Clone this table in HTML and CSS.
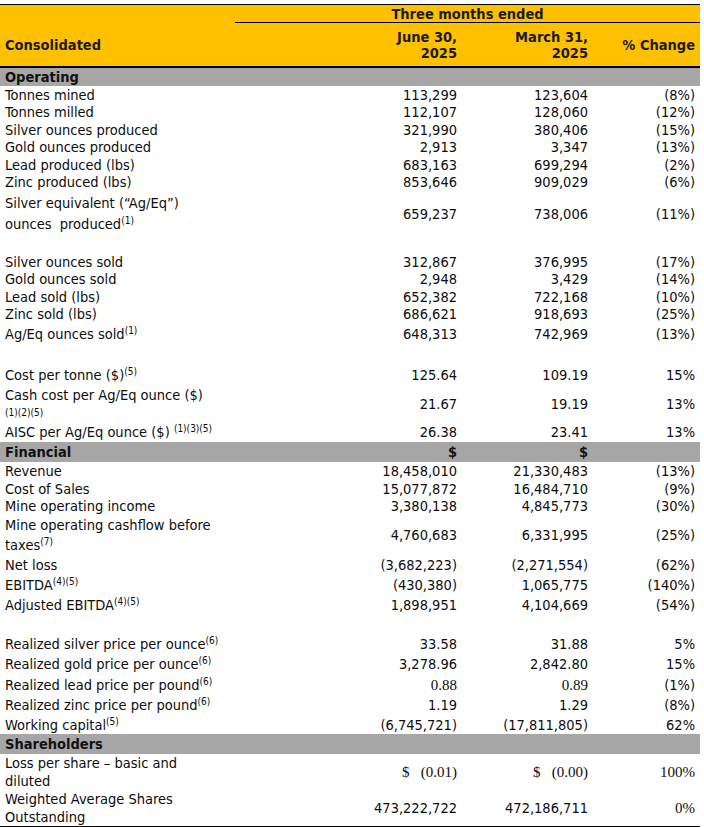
FILE: index.html
```html
<!DOCTYPE html>
<html>
<head>
<meta charset="utf-8">
<link rel="stylesheet" href="styles.css">
</head>
<body>
<table class="fin">
  <colgroup><col class="c0"><col class="c1"><col class="c2"><col class="c3"></colgroup>
  <thead>
    <tr class="hrow1"><th class="lbl"></th><th colspan="3" class="period">Three months ended</th></tr>
    <tr class="hrow2"><th class="lbl">Consolidated</th><th class="num">June 30,<br>2025</th><th class="num">March 31,<br>2025</th><th class="num">% Change</th></tr>
  </thead>
  <tbody>
    <tr class="sec h20x"><td>Operating</td><td></td><td></td><td></td></tr>
    <tr class="h175"><td>Tonnes mined</td><td class="num">113,299</td><td class="num">123,604</td><td class="num">(8%)</td></tr>
    <tr class="h175"><td>Tonnes milled</td><td class="num">112,107</td><td class="num">128,060</td><td class="num">(12%)</td></tr>
    <tr class="h175"><td>Silver ounces produced</td><td class="num">321,990</td><td class="num">380,406</td><td class="num">(15%)</td></tr>
    <tr class="h175"><td>Gold ounces produced</td><td class="num">2,913</td><td class="num">3,347</td><td class="num">(13%)</td></tr>
    <tr class="h175"><td>Lead produced (lbs)</td><td class="num">683,163</td><td class="num">699,294</td><td class="num">(2%)</td></tr>
    <tr class="h175"><td>Zinc produced (lbs)</td><td class="num">853,646</td><td class="num">909,029</td><td class="num">(6%)</td></tr>
    <tr class="h45"><td class="lh21">Silver equivalent (“Ag/Eq”)<br>ounces&nbsp; produced<sup>(1)</sup></td><td class="num">659,237</td><td class="num">738,006</td><td class="num">(11%)</td></tr>
    <tr class="h17"><td></td><td></td><td></td><td></td></tr>
    <tr class="h175"><td>Silver ounces sold</td><td class="num">312,867</td><td class="num">376,995</td><td class="num">(17%)</td></tr>
    <tr class="h175"><td>Gold ounces sold</td><td class="num">2,948</td><td class="num">3,429</td><td class="num">(14%)</td></tr>
    <tr class="h175"><td>Lead sold (lbs)</td><td class="num">652,382</td><td class="num">722,168</td><td class="num">(10%)</td></tr>
    <tr class="h175"><td>Zinc sold (lbs)</td><td class="num">686,621</td><td class="num">918,693</td><td class="num">(25%)</td></tr>
    <tr class="h22"><td>Ag/Eq ounces sold<sup>(1)</sup></td><td class="num">648,313</td><td class="num">742,969</td><td class="num">(13%)</td></tr>
    <tr class="h19"><td></td><td></td><td></td><td></td></tr>
    <tr class="h22"><td>Cost per tonne ($)<sup>(5)</sup></td><td class="num">125.64</td><td class="num">109.19</td><td class="num">15%</td></tr>
    <tr class="h35"><td class="lh16">Cash cost per Ag/Eq ounce ($)<br><span class="small">(1)(2)(5)</span></td><td class="num">21.67</td><td class="num">19.19</td><td class="num">13%</td></tr>
    <tr class="h21"><td>AISC per Ag/Eq ounce ($) <sup>(1)(3)(5)</sup></td><td class="num">26.38</td><td class="num">23.41</td><td class="num">13%</td></tr>
    <tr class="sec h20"><td>Financial</td><td class="num">$</td><td class="num">$</td><td></td></tr>
    <tr class="h18"><td>Revenue</td><td class="num">18,458,010</td><td class="num">21,330,483</td><td class="num">(13%)</td></tr>
    <tr class="h17"><td>Cost of Sales</td><td class="num">15,077,872</td><td class="num">16,484,710</td><td class="num">(9%)</td></tr>
    <tr class="h18"><td>Mine operating income</td><td class="num">3,380,138</td><td class="num">4,845,773</td><td class="num">(30%)</td></tr>
    <tr class="h39"><td class="lh20">Mine operating cashflow before<br>taxes<sup>(7)</sup></td><td class="num">4,760,683</td><td class="num">6,331,995</td><td class="num">(25%)</td></tr>
    <tr class="h19"><td>Net loss</td><td class="num">(3,682,223)</td><td class="num">(2,271,554)</td><td class="num">(62%)</td></tr>
    <tr class="h21"><td>EBITDA<sup>(4)(5)</sup></td><td class="num">(430,380)</td><td class="num">1,065,775</td><td class="num">(140%)</td></tr>
    <tr class="h19"><td>Adjusted EBITDA<sup>(4)(5)</sup></td><td class="num">1,898,951</td><td class="num">4,104,669</td><td class="num">(54%)</td></tr>
    <tr class="h20"><td></td><td></td><td></td><td></td></tr>
    <tr class="h20"><td>Realized silver price per ounce<sup>(6)</sup></td><td class="num">33.58</td><td class="num">31.88</td><td class="num">5%</td></tr>
    <tr class="h20"><td>Realized gold price per ounce<sup>(6)</sup></td><td class="num">3,278.96</td><td class="num">2,842.80</td><td class="num">15%</td></tr>
    <tr class="h21"><td>Realized lead price per pound<sup>(6)</sup></td><td class="num serif">0.88</td><td class="num serif">0.89</td><td class="num">(1%)</td></tr>
    <tr class="h20"><td>Realized zinc price per pound<sup>(6)</sup></td><td class="num">1.19</td><td class="num">1.29</td><td class="num">(8%)</td></tr>
    <tr class="h19"><td>Working capital<sup>(5)</sup></td><td class="num">(6,745,721)</td><td class="num">(17,811,805)</td><td class="num">62%</td></tr>
    <tr class="sec h20"><td>Shareholders</td><td></td><td></td><td></td></tr>
    <tr class="h36"><td class="lh18">Loss per share – basic and<br>diluted</td><td class="num serif">$&nbsp;&nbsp; (0.01)</td><td class="num serif">$&nbsp;&nbsp; (0.00)</td><td class="num serif">100%</td></tr>
    <tr class="h32"><td class="lh18">Weighted Average Shares<br>Outstanding</td><td class="num">473,222,722</td><td class="num">472,186,711</td><td class="num serif">0%</td></tr>
  </tbody>
</table>
</body>
</html>
```

FILE: styles.css
```css
html, body {
  margin: 0;
  padding: 0;
  background: #ffffff;
}

.fin {
  margin-top: 4px;
  width: 700px;
  table-layout: fixed;
  border-collapse: separate;
  border-spacing: 0;
  border-top: 1px solid #000;
  border-bottom: 3px solid #000;
  font-family: "DejaVu Sans Condensed", "DejaVu Sans", sans-serif;
  font-stretch: condensed;
  font-size: 14.5px;
  color: #0d0d0d;
}

.c0 { width: 235px; }
.c1 { width: 227px; }
.c2 { width: 130px; }
.c3 { width: 108px; }

.fin th,
.fin td {
  padding: 0 5px;
  vertical-align: middle;
  line-height: 16px;
  white-space: nowrap;
}

.fin td:nth-child(3),
.fin th:nth-child(3) {
  padding-right: 4px;
}

.fin thead th {
  background: #ffc000;
  font-weight: bold;
  color: #1a1a1a;
}

.hrow1 th {
  height: 17px;
  text-align: center;
}

.hrow1 .period {
  border-bottom: 1px solid #000;
}

.hrow2 th {
  height: 43px;
  border-bottom: 2px solid #000;
}

.fin .lbl { text-align: left; }
.fin .num { text-align: right; }

.sec td {
  background: #a6a6a6;
  font-weight: bold;
  color: #111;
}

.fin .serif {
  font-family: "Liberation Serif", serif;
  font-stretch: normal;
  font-size: 15px;
}

sup {
  font-size: 10px;
  line-height: 0;
  vertical-align: 5px;
}

.small {
  font-size: 10px;
}

.fin .lh21 { line-height: 21px; }
.fin .lh20 { line-height: 20px; }
.fin .lh18 { line-height: 18px; }
.fin .lh16 { line-height: 16px; }

.h17 td { height: 17px; }
.h175 td { height: 17.5px; }
.h18 td { height: 18px; }
.h19 td { height: 19px; }
.h20 td { height: 20px; }
.h20x td { height: 18px; }
.h21 td { height: 21px; }
.h22 td { height: 22px; }
.h32 td { height: 32px; }
.h35 td { height: 35px; }
.h36 td { height: 36px; }
.h39 td { height: 39px; }
.h45 td { height: 45px; }
```
